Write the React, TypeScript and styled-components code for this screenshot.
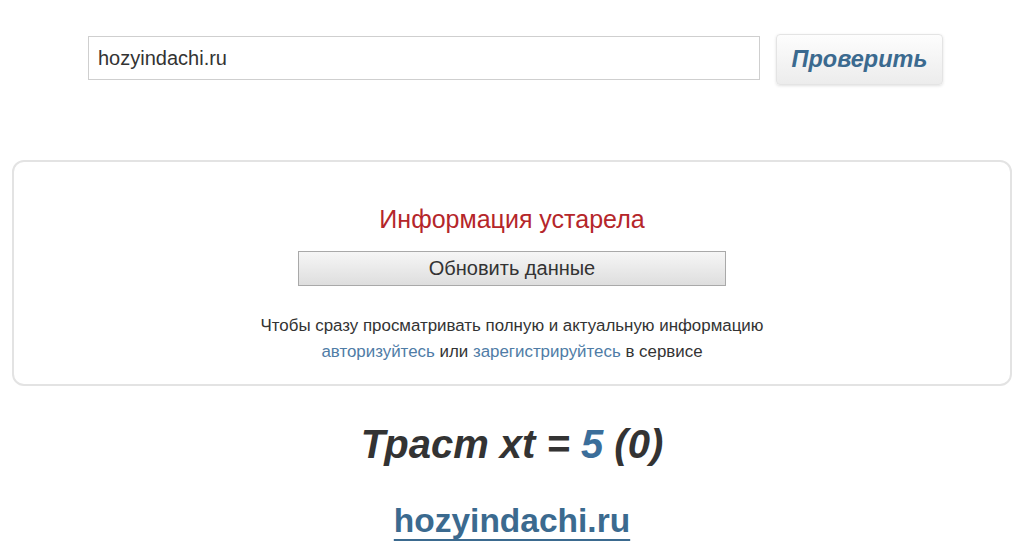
import React from 'react';
import styled, { createGlobalStyle } from 'styled-components';

const GlobalStyle = createGlobalStyle`
  html, body {
    margin: 0;
    padding: 0;
    background: #fff;
    font-family: "Liberation Sans", Arial, sans-serif;
    color: #333;
  }
`;

const Page = styled.div`
  width: 1024px;
  display: flex;
  flex-direction: column;
  align-items: center;
`;

const SearchRow = styled.form`
  display: flex;
  align-items: flex-start;
  gap: 16px;
  margin-top: 34px;
  margin-left: 7px;
`;

const DomainInput = styled.input`
  width: 672px;
  height: 44px;
  margin-top: 2px;
  box-sizing: border-box;
  border: 1px solid #cfcfcf;
  padding: 1px 9px 0;
  font-family: "Liberation Sans", Arial, sans-serif;
  font-size: 20px;
  color: #333;
  outline: none;
`;

const CheckButton = styled.button`
  width: 167px;
  height: 51px;
  border: 1px solid #e4e4e4;
  border-radius: 4px;
  background: linear-gradient(#fdfdfd, #ececec);
  box-shadow: 0 1px 3px rgba(0, 0, 0, 0.12);
  font-family: "Liberation Sans", Arial, sans-serif;
  font-size: 23.5px;
  font-weight: bold;
  font-style: italic;
  color: #3b6a8f;
  cursor: pointer;
`;

const Card = styled.section`
  box-sizing: border-box;
  width: 1000px;
  height: 226px;
  margin-top: 75px;
  border: 2px solid #e3e3e3;
  border-radius: 12px;
  display: flex;
  flex-direction: column;
  align-items: center;
  padding-top: 43px;
`;

const Stale = styled.div`
  font-size: 25px;
  color: #b5262a;
  line-height: 28px;
`;

const RefreshButton = styled.button`
  margin-top: 18px;
  width: 428px;
  height: 35px;
  box-sizing: border-box;
  border: 1px solid #a9a9a9;
  background: linear-gradient(#f6f6f6, #dedede);
  font-family: "Liberation Sans", Arial, sans-serif;
  font-size: 20px;
  color: #333;
  cursor: pointer;
`;

const Note = styled.p`
  margin: 27px 0 0;
  font-size: 16.9px;
  line-height: 26px;
  text-align: center;
  color: #333;
`;

const NoteLink = styled.a`
  color: #4f7ca6;
  text-decoration: none;
`;

const Trust = styled.div`
  margin-top: 35px;
  font-size: 40px;
  font-weight: bold;
  font-style: italic;
  color: #333;
  line-height: 46px;
`;

const TrustValue = styled.span`
  color: #3b6e9a;
`;

const SiteLink = styled.a`
  margin-top: 34px;
  font-size: 33.5px;
  font-weight: bold;
  color: #3b6a8f;
  text-decoration: underline;
  text-decoration-thickness: 2px;
  text-underline-offset: 7px;
  line-height: 40px;
`;

export default function App() {
  return (
    <>
      <GlobalStyle />
      <Page>
        <SearchRow onSubmit={(e) => e.preventDefault()}>
          <DomainInput defaultValue="hozyindachi.ru" />
          <CheckButton type="submit">Проверить</CheckButton>
        </SearchRow>
        <Card>
          <Stale>Информация устарела</Stale>
          <RefreshButton type="button">Обновить данные</RefreshButton>
          <Note>
            Чтобы сразу просматривать полную и актуальную информацию
            <br />
            <NoteLink href="#">авторизуйтесь</NoteLink> или{' '}
            <NoteLink href="#">зарегистрируйтесь</NoteLink> в сервисе
          </Note>
        </Card>
        <Trust>
          Траст xt = <TrustValue>5</TrustValue> (0)
        </Trust>
        <SiteLink href="#">hozyindachi.ru</SiteLink>
      </Page>
    </>
  );
}
